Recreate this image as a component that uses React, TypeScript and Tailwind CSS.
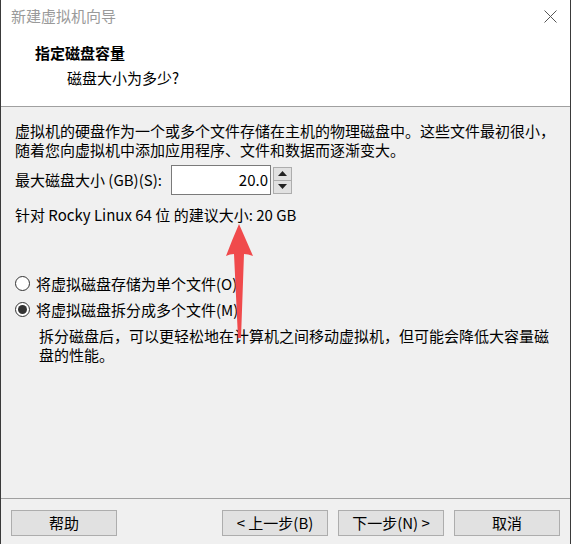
import React from "react"

const font = { fontFamily: '"Noto Sans CJK SC", "Microsoft YaHei", sans-serif' }

function Btn({ label }: { label: string }) {
  return (
    <button className="w-[106px] h-[26px] bg-[#e1e1e1] border border-[#adadad] text-[15px] leading-[24px] text-black">
      {label}
    </button>
  )
}

function Radio({ checked, label }: { checked?: boolean; label: string }) {
  return (
    <div className="flex items-center h-[19px] gap-[6px]">
      <span className="w-[15px] h-[15px] rounded-full border border-[#333] bg-white flex items-center justify-center">
        {checked && <span className="w-[9px] h-[9px] rounded-full bg-[#333]" />}
      </span>
      <span className="leading-[19px]">{label}</span>
    </div>
  )
}

function Spinner() {
  return (
    <div className="flex flex-col w-[19px] h-[27px] border border-[#adadad] bg-[#e1e1e1]">
      <div className="flex-1 flex items-center justify-center border-b border-[#adadad]">
        <svg width="9" height="5" viewBox="0 0 9 5">
          <path d="M0 5 L4.5 0 L9 5 Z" fill="#222" />
        </svg>
      </div>
      <div className="flex-1 flex items-center justify-center">
        <svg width="9" height="5" viewBox="0 0 9 5">
          <path d="M0 0 L4.5 5 L9 0 Z" fill="#222" />
        </svg>
      </div>
    </div>
  )
}

export default function App() {
  return (
    <div className="relative w-[571px] h-[544px] flex text-black text-[15px]" style={font}>
      <div className="w-[1px] bg-[#3a3a3a]" />
      <div className="flex-1 flex flex-col bg-[#f0f0f0]">
        <div className="h-[32px] bg-white flex items-center justify-between pl-[10px] pr-[13px]">
          <span className="text-[15px] text-[#9a9a9a] leading-[20px]">新建虚拟机向导</span>
          <svg width="13" height="13" viewBox="0 0 13 13">
            <path d="M0.5 0.5 L12.5 12.5 M12.5 0.5 L0.5 12.5" stroke="#555" strokeWidth="1" />
          </svg>
        </div>
        <div className="h-[75px] bg-white border-b border-[#a0a0a0] pl-[34px] pt-[11px]">
          <div className="font-bold leading-[20px]">指定磁盘容量</div>
          <div className="pl-[32px] mt-[5px] leading-[20px]">磁盘大小为多少?</div>
        </div>
        <div className="flex-1 flex flex-col pl-[14px] pt-[14px]">
          <p className="leading-[19px]">
            虚拟机的硬盘作为一个或多个文件存储在主机的物理磁盘中。这些文件最初很小，
            <br />
            随着您向虚拟机中添加应用程序、文件和数据而逐渐变大。
          </p>
          <div className="flex items-center mt-[6px] h-[30px]">
            <span className="w-[156px]">最大磁盘大小 (GB)(S):</span>
            <div className="w-[100px] h-[30px] bg-white border border-[#7a7a7a] flex items-center justify-end pr-[2px]">
              20.0
            </div>
            <div className="ml-[2px]">
              <Spinner />
            </div>
          </div>
          <p className="mt-[10px] leading-[19px]">针对 Rocky Linux 64 位 的建议大小: 20 GB</p>
          <div className="mt-[50px] flex flex-col gap-[7px]">
            <Radio label="将虚拟磁盘存储为单个文件(O)" />
            <Radio checked label="将虚拟磁盘拆分成多个文件(M)" />
          </div>
          <p className="mt-[7px] ml-[24px] mr-[16px] leading-[19px]">
            拆分磁盘后，可以更轻松地在计算机之间移动虚拟机，但可能会降低大容量磁盘的性能。
          </p>
        </div>
        <div className="border-t border-[#a0a0a0] h-[46px] flex items-start justify-between pl-[10px] pr-[10px] pt-[11px]">
          <Btn label="帮助" />
          <div className="flex gap-[10px]">
            <Btn label="< 上一步(B)" />
            <Btn label="下一步(N) >" />
            <Btn label="取消" />
          </div>
        </div>
      </div>
      <div className="w-[1px] bg-[#3a3a3a]" />
      <svg className="absolute left-0 top-0 pointer-events-none" width="571" height="544" viewBox="0 0 571 544">
        <path
          d="M239 224 Q246 240 253 256 Q248 254 244 254 L241 338 L238 338 L234 254 Q230 254 226 256 Q232 240 239 224 Z"
          fill="#f04a4c"
        />
      </svg>
    </div>
  )
}
